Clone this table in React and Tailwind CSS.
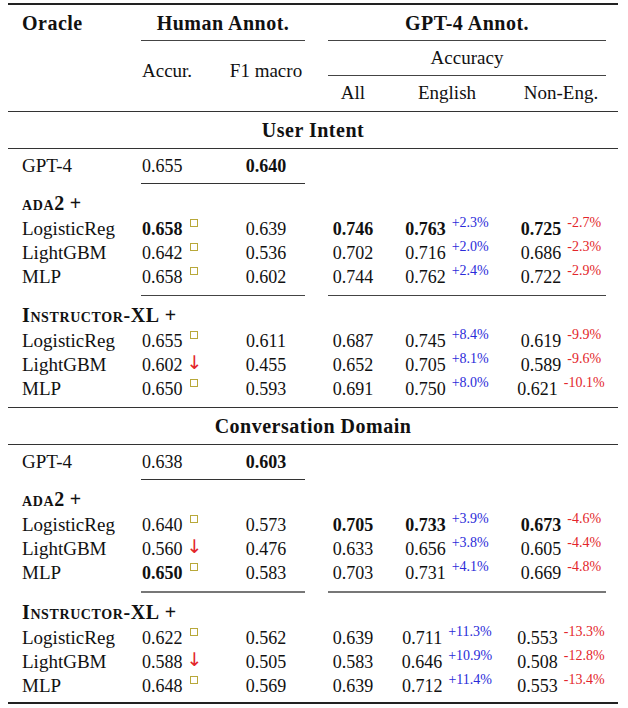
import React from 'react'

const cols = 'grid grid-cols-[128px_86px_88px_13px_60px_128px_100px]'
const head = 'font-bold text-[20px] tracking-[0.5px]'

const sections = [
  {
    title: 'User Intent',
    gpt: ['0.655', '0.640'],
    groups: [
      {
        name: 'ada2',
        rows: [
          ['LogisticReg', ['0.658', 'sq', true], '0.639', ['0.746', true], ['0.763', '+2.3%', true], ['0.725', '-2.7%', true]],
          ['LightGBM', ['0.642', 'sq'], '0.536', ['0.702'], ['0.716', '+2.0%'], ['0.686', '-2.3%']],
          ['MLP', ['0.658', 'sq'], '0.602', ['0.744'], ['0.762', '+2.4%'], ['0.722', '-2.9%']],
        ],
      },
      {
        name: 'Instructor-XL',
        rows: [
          ['LogisticReg', ['0.655', 'sq'], '0.611', ['0.687'], ['0.745', '+8.4%'], ['0.619', '-9.9%']],
          ['LightGBM', ['0.602', 'down'], '0.455', ['0.652'], ['0.705', '+8.1%'], ['0.589', '-9.6%']],
          ['MLP', ['0.650', 'sq'], '0.593', ['0.691'], ['0.750', '+8.0%'], ['0.621', '-10.1%']],
        ],
      },
    ],
  },
  {
    title: 'Conversation Domain',
    gpt: ['0.638', '0.603'],
    groups: [
      {
        name: 'ada2',
        rows: [
          ['LogisticReg', ['0.640', 'sq'], '0.573', ['0.705', true], ['0.733', '+3.9%', true], ['0.673', '-4.6%', true]],
          ['LightGBM', ['0.560', 'down'], '0.476', ['0.633'], ['0.656', '+3.8%'], ['0.605', '-4.4%']],
          ['MLP', ['0.650', 'sq', true], '0.583', ['0.703'], ['0.731', '+4.1%'], ['0.669', '-4.8%']],
        ],
      },
      {
        name: 'Instructor-XL',
        rows: [
          ['LogisticReg', ['0.622', 'sq'], '0.562', ['0.639'], ['0.711', '+11.3%'], ['0.553', '-13.3%']],
          ['LightGBM', ['0.588', 'down'], '0.505', ['0.583'], ['0.646', '+10.9%'], ['0.508', '-12.8%']],
          ['MLP', ['0.648', 'sq'], '0.569', ['0.639'], ['0.712', '+11.4%'], ['0.553', '-13.4%']],
        ],
      },
    ],
  },
]

function Marker({ kind }) {
  if (kind === 'down') {
    return <span className="ml-[4px] relative -top-[3px] text-[19px] leading-none font-['DejaVu_Sans',sans-serif] text-[#e3262b]">↓</span>
  }
  return <span className="ml-[7px] relative -top-[6px] inline-block w-[8px] h-[8px] border border-[#b8a83a]" />
}

function Delta({ v }) {
  const up = v.startsWith('+')
  return (
    <span className={`ml-[6px] relative -top-[6px] text-[14px] leading-none ${up ? 'text-[#2b2bd9]' : 'text-[#e3262b]'}`}>{v}</span>
  )
}

function Row({ r }) {
  const [name, acc, f1, all, eng, non] = r
  return (
    <div className={`${cols} h-[24px] items-center`}>
      <div className="pl-[14px] text-[19px]">{name}</div>
      <div className="pl-[6px] flex items-center">
        <span className={acc[2] ? 'font-bold' : ''}>{acc[0]}</span>
        <Marker kind={acc[1]} />
      </div>
      <div className="text-center">{f1}</div>
      <div />
      <div className={`text-center ${all[1] ? 'font-bold' : ''}`}>{all[0]}</div>
      <div className="flex justify-center items-center">
        <span className={eng[2] ? 'font-bold' : ''}>{eng[0]}</span>
        <Delta v={eng[1]} />
      </div>
      <div className="flex justify-center items-center">
        <span className={non[2] ? 'font-bold' : ''}>{non[0]}</span>
        <Delta v={non[1]} />
      </div>
    </div>
  )
}

function GroupTitle({ name }) {
  return (
    <div className="h-[24px] flex items-center pl-[14px] font-bold text-[20px]">
      <span className="[font-variant:small-caps] tracking-[0.6px]">{name}</span>
      <span className="ml-[5px]">+</span>
    </div>
  )
}

function SplitRule({ thick }) {
  const line = thick ? 'h-[2px] bg-[#777]' : 'h-px bg-[#444]'
  return (
    <div className={cols}>
      <div />
      <div className={`col-span-2 mx-[5px] ${line}`} />
      <div />
      <div className={`col-span-3 mx-[5px] ${line}`} />
    </div>
  )
}

function Section({ s, last }) {
  return (
    <div className={last ? 'border-b-2 border-[#222]' : 'border-b border-[#333]'}>
      <div className={`h-[37px] flex items-center justify-center border-b border-[#333] ${head}`}>{s.title}</div>
      <div className={`${cols} h-[34px] items-center`}>
        <div className="pl-[14px] text-[19px]">GPT-4</div>
        <div className="pl-[6px]">{s.gpt[0]}</div>
        <div className="text-center font-bold">{s.gpt[1]}</div>
      </div>
      <div className={cols}>
        <div />
        <div className="col-span-2 mx-[5px] h-px bg-[#333]" />
      </div>
      <div className="pt-[7px] pb-[8px]">
        <GroupTitle name={s.groups[0].name} />
        {s.groups[0].rows.map((r, i) => <Row key={i} r={r} />)}
      </div>
      <SplitRule thick={last} />
      <div className={last ? 'pt-[7px] pb-[6px]' : 'pt-[7px] pb-[8px]'}>
        <GroupTitle name={s.groups[1].name} />
        {s.groups[1].rows.map((r, i) => <Row key={i} r={r} />)}
      </div>
    </div>
  )
}

export default function App() {
  return (
    <div className="w-[628px] h-[708px] bg-white pt-[3px] font-['Liberation_Serif',serif] text-[18px] text-[#111]">
      <div className="ml-[8px] w-[610px] border-t-2 border-[#222]">
        {/* Header */}
        <div className={`${cols} grid-rows-[35px_1px_34px_1px_35px] border-b border-[#333] text-[19px]`}>
          <div className={`row-start-1 col-start-1 pl-[14px] flex items-center ${head}`}>Oracle</div>
          <div className={`row-start-1 col-start-2 col-span-2 flex items-center justify-center ${head}`}>Human Annot.</div>
          <div className="row-start-2 col-start-2 col-span-2 mx-[5px] bg-[#444]" />
          <div className="row-start-3 row-span-3 col-start-2 pl-[6px] pb-[10px] flex items-center">Accur.</div>
          <div className="row-start-3 row-span-3 col-start-3 pb-[10px] flex items-center justify-center">F1 macro</div>
          <div className={`row-start-1 col-start-5 col-span-3 flex items-center justify-center ${head}`}>GPT-4 Annot.</div>
          <div className="row-start-2 col-start-5 col-span-3 mx-[5px] bg-[#444]" />
          <div className="row-start-3 col-start-5 col-span-3 flex items-center justify-center">Accuracy</div>
          <div className="row-start-4 col-start-5 col-span-3 mx-[5px] bg-[#444]" />
          <div className="row-start-5 col-start-5 flex items-center justify-center">All</div>
          <div className="row-start-5 col-start-6 flex items-center justify-center">English</div>
          <div className="row-start-5 col-start-7 flex items-center justify-center">Non-Eng.</div>
        </div>
        {sections.map((s, i) => <Section key={i} s={s} last={i === sections.length - 1} />)}
      </div>
    </div>
  )
}
